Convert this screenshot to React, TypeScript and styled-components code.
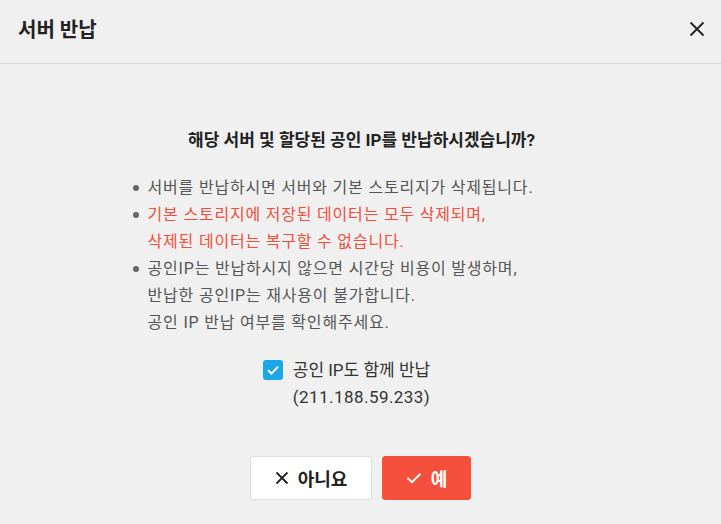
import React from "react";
import styled, { createGlobalStyle } from "styled-components";

const GlobalStyle = createGlobalStyle`
  html, body {
    margin: 0;
    padding: 0;
    background: #f0f0f0;
  }
  body {
    font-family: Roboto, "Noto Sans CJK KR", sans-serif;
  }
`;

const notices: { warn?: boolean; lines: string[] }[] = [
  { lines: ["서버를 반납하시면 서버와 기본 스토리지가 삭제됩니다."] },
  {
    warn: true,
    lines: ["기본 스토리지에 저장된 데이터는 모두 삭제되며,", "삭제된 데이터는 복구할 수 없습니다."],
  },
  {
    lines: [
      "공인IP는 반납하시지 않으면 시간당 비용이 발생하며,",
      "반납한 공인IP는 재사용이 불가합니다.",
      "공인 IP 반납 여부를 확인해주세요.",
    ],
  },
];

const App: React.FC = () => {
  return (
    <>
      <GlobalStyle />
      <Modal>
        <Header>
          <Title>서버 반납</Title>
          <CloseButton aria-label="닫기">
            <svg width="16" height="16" viewBox="0 0 16 16">
              <path d="M1.5 1.5L14.5 14.5M14.5 1.5L1.5 14.5" stroke="#222" strokeWidth="1.8" />
            </svg>
          </CloseButton>
        </Header>
        <Body>
          <Question>해당 서버 및 할당된 공인 IP를 반납하시겠습니까?</Question>
          <NoticeList>
            {notices.map((n, i) => (
              <NoticeItem key={i}>
                <Dot />
                <NoticeText $warn={n.warn}>
                  {n.lines.map((l, j) => (
                    <div key={j}>{l}</div>
                  ))}
                </NoticeText>
              </NoticeItem>
            ))}
          </NoticeList>
          <CheckRow>
            <CheckBox>
              <svg width="14" height="14" viewBox="0 0 14 14">
                <path d="M2 7.2L5.6 10.6L12 3.6" stroke="#fff" strokeWidth="2" fill="none" />
              </svg>
            </CheckBox>
            <CheckLabel>
              공인 IP도 함께 반납
              <br />
              <IpText>(211.188.59.233)</IpText>
            </CheckLabel>
          </CheckRow>
          <Actions>
            <Button>
              <svg width="14" height="14" viewBox="0 0 14 14">
                <path d="M1.5 1.5L12.5 12.5M12.5 1.5L1.5 12.5" stroke="#222" strokeWidth="1.8" />
              </svg>
              아니요
            </Button>
            <Button $primary>
              <svg width="16" height="14" viewBox="0 0 16 14">
                <path d="M1.5 7L6 11.2L14.5 2.8" stroke="#fff" strokeWidth="2" fill="none" />
              </svg>
              예
            </Button>
          </Actions>
        </Body>
      </Modal>
    </>
  );
};

export default App;

const Modal = styled.div`
  width: 721px;
  height: 524px;
  background: #f0f0f0;
  display: flex;
  flex-direction: column;
`;

const Header = styled.div`
  height: 64px;
  display: flex;
  align-items: center;
  justify-content: space-between;
  padding: 0 16px 6px 18px;
  border-bottom: 1px solid #dcdcdc;
  box-sizing: border-box;
`;

const Title = styled.div`
  font-size: 20px;
  font-weight: 700;
  color: #222;
`;

const CloseButton = styled.button`
  border: 0;
  background: transparent;
  padding: 0;
  display: flex;
  cursor: pointer;
`;

const Body = styled.div`
  display: flex;
  flex-direction: column;
  align-items: center;
  padding-top: 62px;
`;

const Question = styled.div`
  font-size: 17px;
  font-weight: 700;
  color: #222;
  margin-left: 2px;
`;

const NoticeList = styled.ul`
  list-style: none;
  margin: 23px 0 0 -55px;
  padding: 0;
  display: flex;
  flex-direction: column;
`;

const NoticeItem = styled.li`
  display: flex;
  align-items: flex-start;
  gap: 9px;
`;

const Dot = styled.span`
  width: 6px;
  height: 6px;
  margin-top: 11px;
  border-radius: 50%;
  background: #666;
  flex: none;
`;

const NoticeText = styled.div<{ $warn?: boolean }>`
  font-size: 16px;
  letter-spacing: 0.8px;
  line-height: 27px;
  color: ${(p) => (p.$warn ? "#f24e3a" : "#555")};
`;

const CheckRow = styled.div`
  display: flex;
  align-items: flex-start;
  gap: 10px;
  margin: 21px 0 0 -28px;
`;

const CheckBox = styled.span`
  width: 20px;
  height: 20px;
  margin-top: 3px;
  border-radius: 3px;
  background: #1aa6e8;
  display: flex;
  align-items: center;
  justify-content: center;
`;

const CheckLabel = styled.div`
  font-size: 17px;
  line-height: 27px;
  color: #333;
`;

const IpText = styled.span`
  letter-spacing: 0.45px;
`;

const Actions = styled.div`
  display: flex;
  gap: 10px;
  margin-top: 45px;
`;

const Button = styled.button<{ $primary?: boolean }>`
  height: 44px;
  padding: 0 22px;
  min-width: ${(p) => (p.$primary ? "89px" : "122px")};
  display: flex;
  align-items: center;
  justify-content: center;
  gap: 9px;
  border-radius: 3px;
  border: 1px solid ${(p) => (p.$primary ? "#f4503c" : "#dddddd")};
  background: ${(p) => (p.$primary ? "#f4503c" : "#ffffff")};
  color: ${(p) => (p.$primary ? "#ffffff" : "#222")};
  font-family: Roboto, "Noto Sans CJK KR", sans-serif;
  font-size: 18px;
  font-weight: 700;
  box-sizing: border-box;
  cursor: pointer;
`;
